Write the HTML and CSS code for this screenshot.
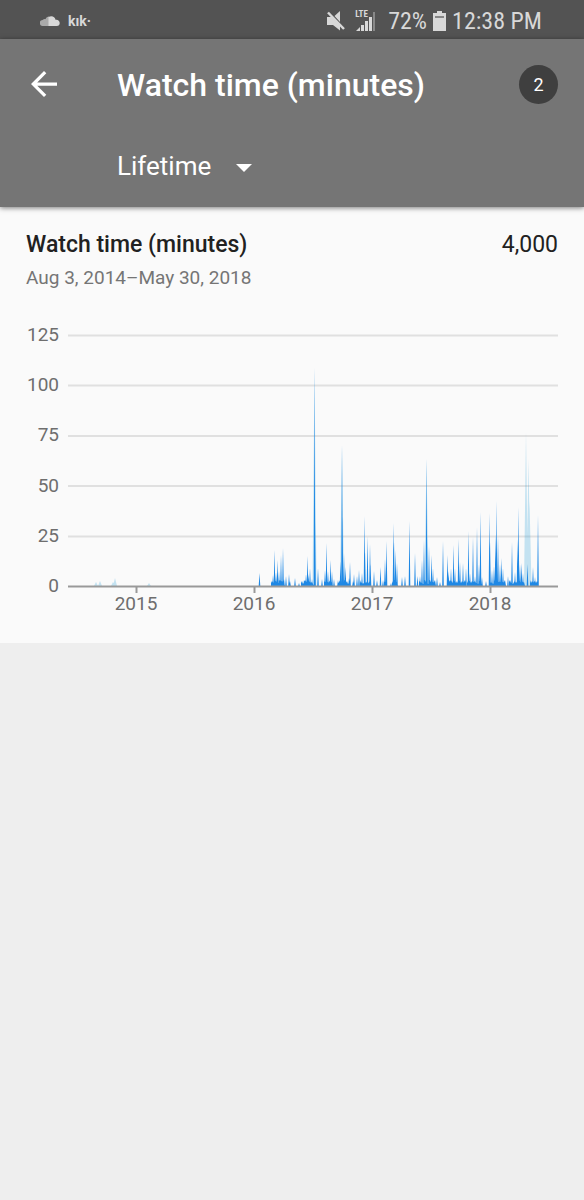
FILE: index.html
```html
<!DOCTYPE html>
<html lang="en">
<head>
    <meta charset="utf-8">
    <title>Watch time (minutes)</title>
    <meta name="viewport" content="width=device-width, initial-scale=1.0">
    <link rel="stylesheet" href="styles.css">
</head>
<body>
    <div class="status-bar">
        <div class="status-apps">
            <svg class="cloud" viewBox="0 0 20 10" aria-hidden="true">
                <path fill="#aaa" d="M9 10H3a3 3 0 0 1-.4-6C3.500 3 5 3 5.500 3.200 6 1.500 7.500.600 9 .500z"/>
                <path fill="#d8d8d8" d="M8.500 1C12 -.800 15 1 15.500 3.800c2-.600 4.200.800 4.200 3.100A3 3 0 0 1 16.700 10H8.500z"/>
            </svg>
            <span class="kik">kık·</span>
        </div>
        <div class="status-info">
            <svg class="mute" viewBox="0 0 18 20" aria-hidden="true">
                <path fill="#d8d8d8" d="M0 6h5l8 8v5.500L6 14H0zM7.500 5 13 0v11z"/>
                <path stroke="#d8d8d8" stroke-width="2.500" d="M1 1.500 17 18"/>
            </svg>
            <div class="signal">
                <span>LTE</span>
                <svg viewBox="0 0 21 20" aria-hidden="true">
                    <path fill="#d8d8d8" d="M1 20l4-4v4zM6 14h3v6H6zM10 10h3v10h-3zM14 6h3v14h-3z"/>
                    <path fill="#888" d="M18 1h2v19h-2z"/>
                </svg>
            </div>
            <span>72%</span>
            <svg class="battery" viewBox="0 0 13 20" aria-hidden="true">
                <path fill="#d8d8d8" d="M4 0h5v2h4v18H0V2h4z"/>
                <path fill="#858585" d="M2 5h9v2H2z"/>
            </svg>
            <span>12:38 PM</span>
        </div>
    </div>

    <header class="app-bar">
        <button class="back" aria-label="Back">
            <svg viewBox="4 4 16 16" aria-hidden="true">
                <path fill="#fff" d="M20 11H7.830l5.590-5.590L12 4l-8 8 8 8 1.410-1.410L7.830 13H20z"/>
            </svg>
        </button>
        <h1>Watch time (minutes)</h1>
        <button class="badge">2</button>
        <div class="period">
            <select aria-label="Time period">
                <option>Lifetime</option>
            </select>
            <svg viewBox="0 0 16 8" aria-hidden="true"><path fill="#fff" d="M0 0h16L8 8z"/></svg>
        </div>
    </header>

    <main class="card">
        <div class="card-title">
            <h2>Watch time (minutes)</h2>
            <span>4,000</span>
        </div>
        <p class="range">Aug 3, 2014–May 30, 2018</p>

        <div class="chart">
            <div class="y-axis">
                <span>125</span>
                <span>100</span>
                <span>75</span>
                <span>50</span>
                <span>25</span>
                <span>0</span>
            </div>
            <svg class="plot" viewBox="0 0 490 271" preserveAspectRatio="none" role="img" aria-label="Watch time per day">
                <path class="grid" d="M0 10.500h490M0 60.500h490M0 111h490M0 161h490M0 211.500h490"/>
                <path id="peaks" class="peaks"/>
                <path id="spikes" class="spikes"/>
                <path class="axis" d="M0 261.500h490M68.500 262v6M186.500 262v6M304.500 262v6M422.500 262v6"/>
            </svg>
            <div class="x-axis">
                <span>2015</span>
                <span>2016</span>
                <span>2017</span>
                <span>2018</span>
            </div>
        </div>
    </main>

    <script src="chart.js"></script>
</body>
</html>
```

FILE: styles.css
```css
* { box-sizing: border-box; }
body { margin: 0; min-height: 100vh; background: #eee; font-family: Roboto, "Liberation Sans", sans-serif; color: #212121; }
h1, h2, p { margin: 0; font-weight: 400; }
svg { display: block; }
button { border: 0; padding: 0; background: none; font: inherit; color: inherit; cursor: pointer; }

.status-bar { display: flex; justify-content: space-between; align-items: center; height: 39px; padding: 2px 42px 0 40px; background: #535353; color: #d8d8d8; font-size: 24px; }
.status-apps { display: flex; align-items: center; gap: 8px; }
.cloud { width: 20px; height: 10px; }
.kik { font-size: 14px; font-weight: 700; }
.status-info { display: flex; align-items: center; gap: 6px; font-family: "Roboto Condensed", Roboto, sans-serif; }
.mute { width: 18px; height: 20px; margin-right: 4px; }
.signal { display: grid; margin-right: 6px; }
.signal > * { grid-area: 1 / 1; }
.signal span { font: 700 9px/6px "Roboto Condensed", Roboto, sans-serif; }
.signal svg { width: 21px; height: 20px; }
.battery { width: 13px; height: 20px; }

.app-bar { position: relative; display: grid; grid-template-columns: 91px 1fr auto; grid-template-rows: 90px 78px; align-items: center; padding: 0 26px; background: #757575; color: #fff; box-shadow: 0 1px 5px rgba(0, 0, 0, .5); }
.back { padding-left: 5px; justify-self: start; }
.back svg { width: 26px; height: 26px; }
.app-bar h1 { padding-top: 2px; font-size: 32px; font-weight: 500; line-height: 40px; }
.badge { width: 39px; height: 39px; border-radius: 50%; background: #3f3f3f; font-size: 18px; }
.period { grid-column: 2; justify-self: start; align-self: start; display: grid; align-items: center; height: 74px; }
.period > * { grid-area: 1 / 1; }
.period select { appearance: none; border: 0; padding: 0 40px 0 0; background: none; color: #fff; font: 26px/32px Roboto, sans-serif; }
.period option { color: #212121; }
.period svg { width: 16px; height: 8px; margin-top: 4px; justify-self: end; pointer-events: none; }

.card { padding: 24px 26px 31px; background: #fafafa; }
.card-title { display: flex; justify-content: space-between; font-size: 23px; line-height: 28px; }
.card-title h2 { font-size: 23px; font-weight: 500; }
.range { margin-top: 7px; font-size: 19px; line-height: 24px; color: #757575; }

.chart { display: grid; grid-template-columns: 33px 1fr; column-gap: 9px; margin-top: 35px; color: #6e6e6e; font-size: 19px; }
.y-axis { display: flex; flex-direction: column; justify-content: space-between; align-items: flex-end; line-height: 20px; }
.plot { width: 100%; height: 271px; }
.grid { fill: none; stroke: #e0e0e0; stroke-width: 2; }
.axis { fill: none; stroke: #999; stroke-width: 2; }
.spikes { fill: #1e88e5; }
.peaks { fill: #1e9ad6; opacity: .25; }
.x-axis { grid-column: 2; display: grid; grid-template-columns: repeat(4, 1fr); padding: 0 9px; line-height: 16px; text-align: center; }
```

FILE: chart.js
```js
// [x, height] of each spike, in plot units
const spikes = [
    [191.5, 13], [204, 5], [205, 11], [206.5, 36], [208, 14], [209.5, 26], [211, 15], [213, 31], [215, 38],
    [216, 7], [218, 10], [221, 12], [222, 5], [227, 8], [231, 3], [234, 4], [236, 6], [238, 12],
    [239.5, 30], [240.5, 12], [242, 18], [244, 7], [246.5, 218], [247, 70], [250, 18], [254, 7], [257, 16],
    [258.5, 43], [260, 15], [262.5, 26], [264, 15], [266, 7], [270, 6], [272.5, 25], [274, 141],
    [274.5, 70], [276, 33], [277.5, 19], [281, 8], [282, 24], [285, 5], [286, 12], [289, 10], [291, 16],
    [294, 13], [296.5, 70], [297, 35], [299.5, 50], [302, 42], [302.5, 22], [306, 15], [309, 6],
    [312.5, 19], [315, 6], [317, 27], [318.5, 45], [323, 3], [325.5, 63], [326, 45], [327.5, 36],
    [329, 23], [334, 9], [337, 10], [341.5, 65], [347, 33], [349.5, 10], [352, 10], [354, 26],
    [356, 46], [358.5, 127], [359, 50], [361, 40], [363.5, 31], [365, 18], [369, 9], [372, 4],
    [375, 45], [379.5, 31], [380.5, 15], [383, 18], [385.5, 41], [387, 18], [390.5, 47], [392, 24],
    [395, 23], [398, 18], [400.5, 55], [402, 13], [405, 49], [407, 10], [409, 59], [411, 22],
    [412.5, 74], [414, 9], [418, 5], [421.5, 73], [422, 45], [424, 16], [426, 20], [427.5, 52],
    [428.5, 85], [430, 50], [432, 22], [433.5, 28], [435, 18], [440, 10], [442, 6], [444, 44],
    [447, 14], [449.5, 47], [450.5, 79], [452, 22], [453.5, 23], [455, 13], [459.5, 22], [465, 19],
    [467, 9], [470, 71]
];

// Faint peaks drawn behind the others
const peaks = [[28, 4], [32, 5], [45, 4], [47, 8], [81, 3], [458, 154], [460.5, 127], [461.5, 85],
    [246.5, 219], [274, 141], [358.5, 127]];

// Stretches where there is some activity almost every day
const runs = [[203, 217], [233, 246], [256, 265], [270, 282], [292, 303], [316, 319], [324, 330],
    [351, 368], [379, 398], [399, 414], [422, 438], [441, 457], [462, 470]];

const base = 261;

function triangle([x, h], half) {
    return `M${x - half} ${base}L${x} ${base - h}L${x + half} ${base}Z`;
}

const fill = runs.map(([a, b]) => {
    let d = `M${a} ${base}`;
    for (let x = a; x < b; x++) {
        d += `L${x} ${base - 2 - (x * 7) % 5}`;
    }
    return d + `L${b} ${base}Z`;
});

document.getElementById('spikes').setAttribute('d', spikes.map(s => triangle(s, 0.8)).join('') + fill.join(''));
document.getElementById('peaks').setAttribute('d', peaks.map(p => triangle(p, 2)).join(''));
```
